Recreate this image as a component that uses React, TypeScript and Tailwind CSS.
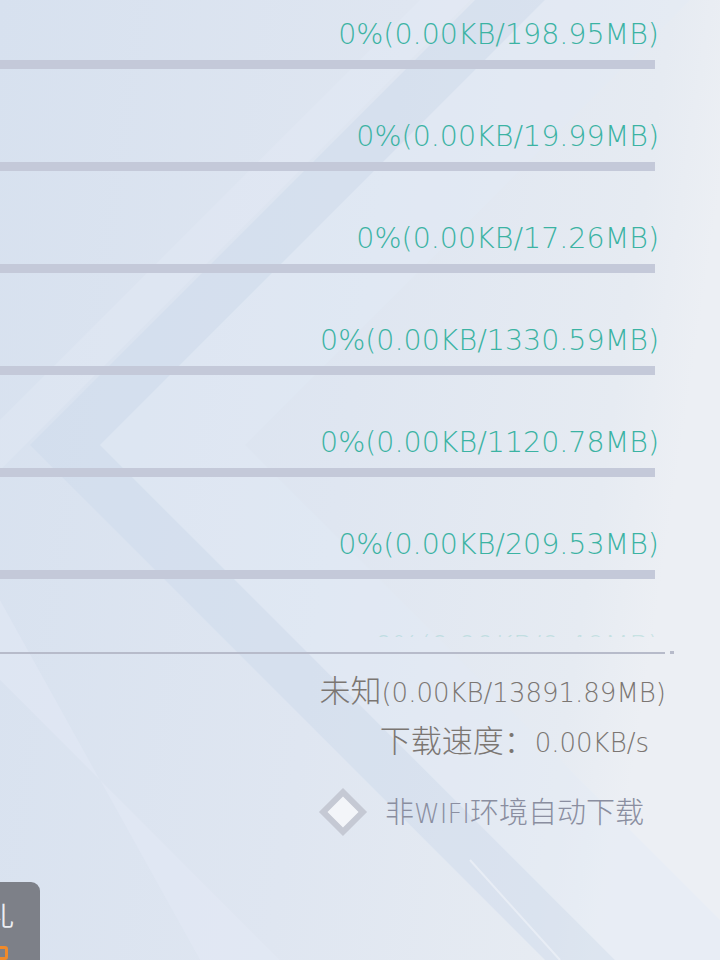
import React from 'react';

const items = [
  '0%(0.00KB/198.95MB)',
  '0%(0.00KB/19.99MB)',
  '0%(0.00KB/17.26MB)',
  '0%(0.00KB/1330.59MB)',
  '0%(0.00KB/1120.78MB)',
  '0%(0.00KB/209.53MB)',
];

const latin = { fontFamily: '"DejaVu Sans", "Noto Sans CJK SC", sans-serif' };
const cjk = { fontFamily: '"Noto Sans CJK SC", sans-serif' };

const Backdrop: React.FC = () => (
  <svg className="absolute inset-0 w-full h-full" viewBox="0 0 720 960" preserveAspectRatio="none">
    <defs>
      <linearGradient id="bg" x1="0" y1="0" x2="1" y2="0.2">
        <stop offset="0" stopColor="#d7e1ef" />
        <stop offset="0.55" stopColor="#dfe6f1" />
        <stop offset="0.9" stopColor="#e6ebf2" />
        <stop offset="1" stopColor="#eceff4" />
      </linearGradient>
    </defs>
    <rect width="720" height="960" fill="url(#bg)" />
    {/* chevron band */}
    <polygon points="475,0 545,0 100,445 615,960 545,960 30,445" fill="#cdd9ec" opacity="0.45" />
    <polygon points="545,0 690,0 245,445 760,960 615,960 100,445" fill="#e3eaf5" opacity="0.35" />
    {/* light diagonals */}
    <polygon points="0,600 0,680 280,960 200,960" fill="#e4eaf5" opacity="0.5" />
    <polygon points="420,0 470,0 0,470 0,420" fill="#e6ecf6" opacity="0.35" />
    <line x1="470" y1="860" x2="560" y2="960" stroke="#f2f5fa" strokeWidth="2" opacity="0.6" />
  </svg>
);

const Diamond: React.FC = () => (
  <svg width="50" height="50" viewBox="0 0 50 50">
    <rect x="11" y="11" width="28" height="28" transform="rotate(45 25 25)" fill="#f3f5f9" stroke="#c5c9d4" strokeWidth="6" />
  </svg>
);

const Cjk: React.FC<{ children: React.ReactNode; small?: boolean }> = ({ children, small }) => (
  <span className={small ? 'text-[29px] font-light' : 'text-[31px] font-light'} style={cjk}>{children}</span>
);

export default function App() {
  return (
    <div className="relative w-[720px] h-[960px] overflow-hidden" style={latin}>
      <Backdrop />
      <div className="relative flex flex-col">
        <div className="h-[637px] overflow-hidden pt-[15px] w-[665px]">
          {items.map((t) => (
            <div key={t} className="flex flex-col h-[102px]">
              <div className="w-[659px] h-[36px] leading-[40px] text-right text-[28.5px] font-extralight text-[#3bb3a3] whitespace-nowrap">{t}</div>
              <div className="mt-[9px] w-[655px] h-[9px] bg-[#c4c9d9]" />
            </div>
          ))}
          <div className="w-[659px] h-[36px] leading-[40px] text-right text-[28.5px] font-extralight text-[#3bb3a3] opacity-20">0%(0.00KB/0.49MB)</div>
        </div>
        <div className="flex items-center mt-[14px]">
          <div className="w-[665px] h-[2px] bg-[#b7bbca]" />
          <div className="ml-[5px] w-[4px] h-[3px] bg-[#b7bbca]" />
        </div>
        <div className="w-[666px] flex flex-col items-end mt-[17px]">
          <div className="h-[36px] leading-[36px] text-[26px] font-extralight text-[#7b7672] whitespace-nowrap"><Cjk>未知</Cjk>(0.00KB/13891.89MB)</div>
          <div className="h-[36px] leading-[36px] text-[26px] font-extralight text-[#7b7672] mt-[14px] mr-[17px] whitespace-nowrap"><Cjk>下载速度：</Cjk>0.00KB/s</div>
        </div>
        <div className="flex items-center ml-[318px] mt-[30px]">
          <Diamond />
          <span className="ml-[17px] text-[26px] leading-[36px] font-extralight text-[#8a8ea0] whitespace-nowrap"><Cjk small>非</Cjk>WIFI<Cjk small>环境自动下载</Cjk></span>
        </div>
      </div>
      <div className="absolute left-0 top-[882px] w-[40px] h-[78px] bg-[#7d8088] rounded-tr-[9px] overflow-hidden" style={cjk}>
        <div className="ml-[-12px] mt-[18px] text-[26px] leading-[30px] text-[#eceef2]">礼</div>
        <div className="ml-[-6px] mt-[16px] w-[14px] h-[14px] border-[3px] border-[#f08a2a] rounded-[3px]" />
      </div>
    </div>
  );
}
